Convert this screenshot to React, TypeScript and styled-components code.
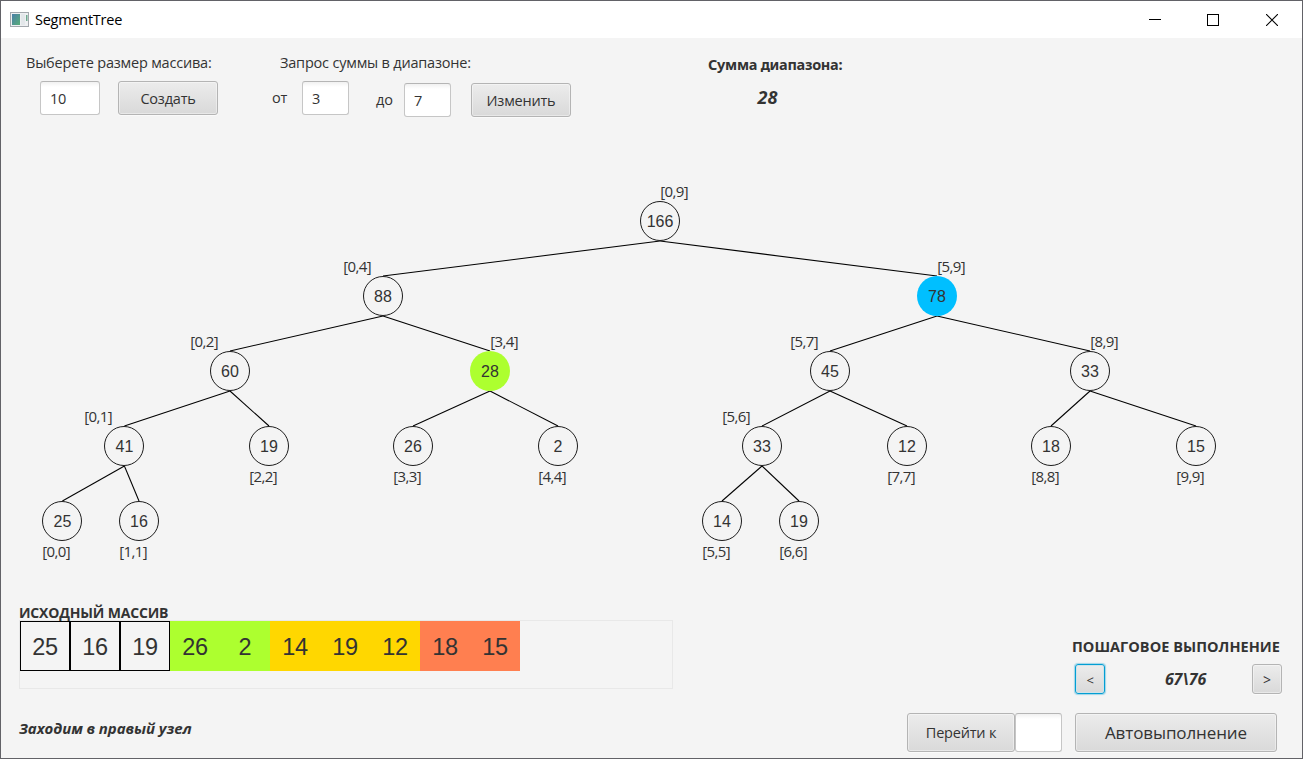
import React from 'react';
import styled, { createGlobalStyle, css } from 'styled-components';

const GlobalStyle = createGlobalStyle`
  * { box-sizing: border-box; }
  body { margin: 0; }
`;

const uiFont = '"Open Sans", "Noto Sans", sans-serif';
const numberFont = '"Liberation Sans", Arial, sans-serif';

const Window = styled.div`
  display: flex;
  flex-direction: column;
  width: 1303px;
  height: 759px;
  border: 1px solid #626267;
  background: #f4f4f4;
  color: #333;
  font: 14.5px/20px ${uiFont};
  letter-spacing: -0.2px;
  white-space: nowrap;
  overflow: hidden;
`;

const TitleBar = styled.header`
  display: flex;
  align-items: center;
  height: 37px;
  flex: none;
  padding-left: 9px;
  background: #fff;
  color: #000;
`;

const AppIcon = styled.svg`
  width: 20px;
  height: 16px;
  margin-right: 5px;
`;

const Title = styled.span`
  flex: 1;
  padding-top: 1px;
  letter-spacing: -0.25px;
`;

const WindowButton = styled.span`
  display: flex;
  justify-content: center;
  width: 58.5px;

  &:last-child { width: 60px; }
`;

const Controls = styled.section`
  display: flex;
  align-items: flex-start;
  flex: none;
  height: 92px;
  padding: 15px 0 0 25px;
`;

const SizeGroup = styled.div`
  width: 246px;
`;

const RangeGroup = styled.div`
  width: 436px;
`;

const SumGroup = styled.div`
  display: flex;
  flex-direction: column;
  align-items: center;
  gap: 13px;
  padding-top: 1px;
`;

const Caption = styled.div<{ $indent?: number }>`
  padding-left: ${(p) => p.$indent ?? 0}px;
`;

const FieldRow = styled.div<{ $indent?: number }>`
  display: flex;
  align-items: flex-start;
  padding: 8px 0 0 ${(p) => p.$indent ?? 0}px;
`;

const FieldLabel = styled.label<{ $width: number }>`
  width: ${(p) => p.$width}px;
  line-height: 34px;
`;

const LoweredFields = styled.div`
  display: flex;
  margin: 2px 0 0 27px;
`;

const TextField = styled.input<{ $width: number; $height?: number }>`
  width: ${(p) => p.$width}px;
  height: ${(p) => p.$height ?? 34}px;
  margin: 0;
  padding: 0 0 0 9px;
  border: 1px solid #c6c6c6;
  border-top-color: #b5b5b5;
  border-radius: 3px;
  outline: none;
  background: linear-gradient(#f1f1f1, #fff 5px);
  color: #333;
  font: inherit;
  letter-spacing: inherit;
`;

const Button = styled.button<{
  $width: number;
  $height?: number;
  $gap?: number;
  $size?: number;
  $focused?: boolean;
}>`
  display: flex;
  align-items: center;
  justify-content: center;
  width: ${(p) => p.$width}px;
  height: ${(p) => p.$height ?? 34}px;
  margin: 0 0 0 ${(p) => p.$gap ?? 0}px;
  padding: 1px 0 0;
  border: 1px solid #b4b4b4;
  border-radius: 3px;
  background: linear-gradient(#ececec, #d9d9d9);
  box-shadow: inset 0 0 0 1px rgba(255, 255, 255, 0.4), 0 1px 0 #fafafa;
  color: #333;
  font: ${(p) => p.$size ?? 14.5}px/20px ${uiFont};
  letter-spacing: ${(p) => (p.$size === 17 ? '-0.1px' : 'inherit')};
  ${(p) =>
    p.$focused &&
    css`
      border-color: #039ed3;
      box-shadow: inset 0 0 0 1px #cfe3ea, 0 0 1px 1px rgba(3, 158, 211, 0.35);
    `}
`;

const SumTitle = styled.div`
  font-weight: 700;
  font-family: "Noto Sans", sans-serif;
  letter-spacing: -0.28px;
`;

const SumValue = styled.div`
  padding-right: 15px;
  font-size: 18px;
  font-weight: 700;
  font-style: italic;
  letter-spacing: 0.3px;
`;

const TreeCanvas = styled.section`
  position: relative;
  flex: none;
  height: 470px;
`;

const Edges = styled.svg`
  display: block;
  width: 1301px;
  height: 470px;
  stroke: #000;
  stroke-width: 1.05;
`;

const Node = styled.div<{ $x: number; $y: number; $fill?: string }>`
  position: absolute;
  left: ${(p) => p.$x - 21}px;
  top: ${(p) => p.$y - 150}px;
  width: 40px;
  height: 40px;
  border: ${(p) => (p.$fill ? 'none' : '1px solid #1c1c1c')};
  border-radius: 50%;
  background: ${(p) => p.$fill ?? 'transparent'};
  display: flex;
  align-items: center;
  justify-content: center;
  padding-top: 2px;
  font: 16px/20px ${numberFont};
  letter-spacing: 0;
`;

const RangeLabel = styled.span<{ $x: number; $y: number }>`
  position: absolute;
  left: ${(p) => p.$x - 0.7}px;
  top: ${(p) => p.$y - 141}px;
  font-size: 15px;
  letter-spacing: -0.6px;
`;

const Footer = styled.section`
  display: flex;
  justify-content: space-between;
  flex: 1;
  padding: 0 20px 0 18px;
`;

const ArraySide = styled.div`
  padding-top: 3px;
`;

const ArrayTitle = styled.div`
  height: 17px;
  font-size: 14px;
  font-weight: 700;
  letter-spacing: -0.17px;
`;

const ArrayPanel = styled.div`
  display: flex;
  width: 654px;
  height: 69px;
  border: 1px solid #e8e8e8;
`;

const Cell = styled.div<{ $fill?: string }>`
  width: 50px;
  height: 50px;
  border: ${(p) => (p.$fill ? 'none' : '1px solid #000')};
  background: ${(p) => p.$fill ?? 'transparent'};
  display: flex;
  align-items: center;
  justify-content: center;
  padding-top: 2px;
  font: 23.5px/30px ${numberFont};
  letter-spacing: -0.3px;
`;

const StatusText = styled.div`
  margin-top: 29px;
  font-size: 15px;
  font-weight: 700;
  font-style: italic;
  letter-spacing: -0.08px;
`;

const StepSide = styled.div`
  display: flex;
  flex-direction: column;
  width: 375px;
  padding-top: 37px;
`;

const StepTitle = styled.div`
  padding-right: 2px;
  text-align: right;
  font-weight: 700;
  letter-spacing: 0.04px;
`;

const Stepper = styled.div`
  display: flex;
  justify-content: space-between;
  margin: 7px 0 0 168px;
`;

const StepCount = styled.div`
  padding-left: 14px;
  line-height: 30px;
  font-size: 16px;
  font-weight: 700;
  font-style: italic;
  letter-spacing: -0.15px;
`;

const JumpRow = styled.div`
  display: flex;
  margin-top: 19px;
`;

const LIME = '#adff2f';
const SKY = '#00bfff';
const GOLD = '#ffd700';
const CORAL = '#ff7f50';

interface TreeNode {
  x: number;
  y: number;
  value: number;
  range: string;
  labelX: number;
  parent?: number;
  fill?: string;
  leaf?: boolean;
}

const nodes: TreeNode[] = [
  { x: 660, y: 221, value: 166, range: '[0,9]', labelX: 660 },
  { x: 383, y: 296, value: 88, range: '[0,4]', labelX: 343, parent: 0 },
  { x: 937, y: 296, value: 78, range: '[5,9]', labelX: 937, parent: 0, fill: SKY },
  { x: 230, y: 371, value: 60, range: '[0,2]', labelX: 190, parent: 1 },
  { x: 490, y: 371, value: 28, range: '[3,4]', labelX: 490, parent: 1, fill: LIME },
  { x: 830, y: 371, value: 45, range: '[5,7]', labelX: 790, parent: 2 },
  { x: 1090, y: 371, value: 33, range: '[8,9]', labelX: 1090, parent: 2 },
  { x: 124.4, y: 446, value: 41, range: '[0,1]', labelX: 84, parent: 3 },
  { x: 269, y: 446, value: 19, range: '[2,2]', labelX: 249, parent: 3, leaf: true },
  { x: 413, y: 446, value: 26, range: '[3,3]', labelX: 393, parent: 4, leaf: true },
  { x: 558, y: 446, value: 2, range: '[4,4]', labelX: 538, parent: 4, leaf: true },
  { x: 762, y: 446, value: 33, range: '[5,6]', labelX: 722, parent: 5 },
  { x: 907, y: 446, value: 12, range: '[7,7]', labelX: 887, parent: 5, leaf: true },
  { x: 1051, y: 446, value: 18, range: '[8,8]', labelX: 1031, parent: 6, leaf: true },
  { x: 1196, y: 446, value: 15, range: '[9,9]', labelX: 1176, parent: 6, leaf: true },
  { x: 62.4, y: 521, value: 25, range: '[0,0]', labelX: 42, parent: 7, leaf: true },
  { x: 139, y: 521, value: 16, range: '[1,1]', labelX: 119, parent: 7, leaf: true },
  { x: 722, y: 521, value: 14, range: '[5,5]', labelX: 702, parent: 11, leaf: true },
  { x: 799, y: 521, value: 19, range: '[6,6]', labelX: 779, parent: 11, leaf: true },
];

const cells: { value: number; fill?: string }[] = [
  { value: 25 },
  { value: 16 },
  { value: 19 },
  { value: 26, fill: LIME },
  { value: 2, fill: LIME },
  { value: 14, fill: GOLD },
  { value: 19, fill: GOLD },
  { value: 12, fill: GOLD },
  { value: 18, fill: CORAL },
  { value: 15, fill: CORAL },
];

function WindowIcon() {
  return (
    <AppIcon viewBox="0 0 20 16">
      <defs>
        <linearGradient id="screen" x1="0" y1="0" x2="1" y2="1">
          <stop offset="0" stopColor="#4a7fa8" />
          <stop offset="1" stopColor="#58ad78" />
        </linearGradient>
      </defs>
      <rect x="0.5" y="0.5" width="18" height="14" fill="#eef0f2" stroke="#a3a8ad" />
      <rect x="2" y="2" width="8" height="11" fill="url(#screen)" />
      <rect x="11" y="2" width="4" height="11" fill="#e3e7ea" />
      <rect x="16" y="3" width="1.5" height="6" fill="#6fa98f" />
    </AppIcon>
  );
}

export default function App() {
  return (
    <>
      <GlobalStyle />
      <Window>
        <TitleBar>
          <WindowIcon />
          <Title>SegmentTree</Title>
          <WindowButton>
            <svg width="13" height="12" viewBox="0 0 13 12">
              <rect x="1" y="5" width="12" height="1" />
            </svg>
          </WindowButton>
          <WindowButton>
            <svg width="12" height="12" viewBox="0 0 12 12">
              <rect x="0.5" y="0.5" width="11" height="11" fill="none" stroke="#000" />
            </svg>
          </WindowButton>
          <WindowButton>
            <svg width="12" height="12" viewBox="0 0 12 12">
              <path d="M0 0L12 12M12 0L0 12" fill="none" stroke="#000" strokeWidth="1.1" />
            </svg>
          </WindowButton>
        </TitleBar>

        <Controls>
          <SizeGroup>
            <Caption>Выберете размер массива:</Caption>
            <FieldRow $indent={14}>
              <TextField $width={60} defaultValue="10" />
              <Button $width={100} $gap={18}>Создать</Button>
            </FieldRow>
          </SizeGroup>
          <RangeGroup>
            <Caption $indent={8}>Запрос суммы в диапазоне:</Caption>
            <FieldRow>
              <FieldLabel $width={30}>от</FieldLabel>
              <TextField $width={47} defaultValue="3" />
              <LoweredFields>
                <FieldLabel $width={28}>до</FieldLabel>
                <TextField $width={47} defaultValue="7" />
                <Button $width={100} $gap={20}>Изменить</Button>
              </LoweredFields>
            </FieldRow>
          </RangeGroup>
          <SumGroup>
            <SumTitle>Сумма диапазона:</SumTitle>
            <SumValue>28</SumValue>
          </SumGroup>
        </Controls>

        <TreeCanvas>
          <Edges viewBox="1 130 1301 470">
            {nodes.map((n, i) => {
              if (n.parent === undefined) return null;
              const p = nodes[n.parent];
              return <line key={i} x1={p.x} y1={p.y + 20} x2={n.x} y2={n.y - 20} />;
            })}
          </Edges>
          {nodes.map((n, i) => (
            <React.Fragment key={i}>
              <Node $x={n.x} $y={n.y} $fill={n.fill}>{n.value}</Node>
              <RangeLabel $x={n.labelX} $y={n.leaf ? n.y + 31 : n.y - 29}>{n.range}</RangeLabel>
            </React.Fragment>
          ))}
        </TreeCanvas>

        <Footer>
          <ArraySide>
            <ArrayTitle>ИСХОДНЫЙ МАССИВ</ArrayTitle>
            <ArrayPanel>
              {cells.map((c, i) => (
                <Cell key={i} $fill={c.fill}>{c.value}</Cell>
              ))}
            </ArrayPanel>
            <StatusText>Заходим в правый узел</StatusText>
          </ArraySide>
          <StepSide>
            <StepTitle>ПОШАГОВОЕ ВЫПОЛНЕНИЕ</StepTitle>
            <Stepper>
              <Button $width={30} $height={30} $size={13} $focused>&lt;</Button>
              <StepCount>67\76</StepCount>
              <Button $width={30} $height={30} $size={14}>&gt;</Button>
            </Stepper>
            <JumpRow>
              <Button $width={108} $height={39}>Перейти к</Button>
              <TextField $width={47} $height={39} />
              <Button $width={202} $height={39} $gap={13} $size={17}>Автовыполнение</Button>
            </JumpRow>
          </StepSide>
        </Footer>
      </Window>
    </>
  );
}
